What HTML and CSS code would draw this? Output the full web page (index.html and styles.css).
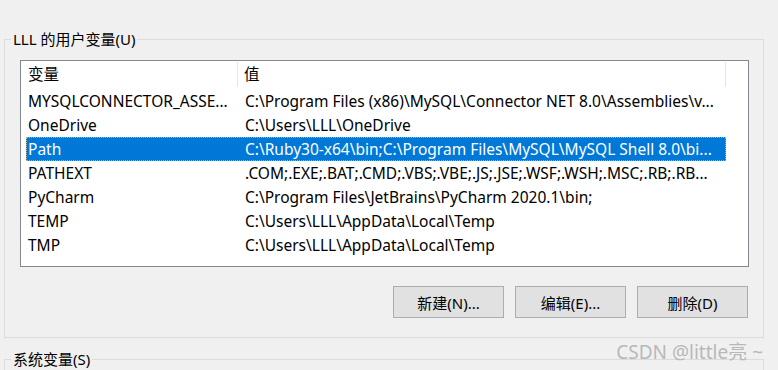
FILE: index.html
```html
<!DOCTYPE html>
<html lang="zh-CN">
  <head>
    <meta charset="UTF-8" />
    <meta name="viewport" content="width=device-width, initial-scale=1.0" />
    <title>环境变量</title>
    <link rel="stylesheet" href="styles.css">
  </head>
  <body>
    <fieldset class="group">
      <legend>LLL 的用户变量(U)</legend>

      <div class="list">
        <div class="list-head">
          <div class="col-name">变量</div>
          <div class="col-value">值</div>
        </div>
        <div class="row">
          <div class="col-name">MYSQLCONNECTOR_ASSE...</div>
          <div class="col-value">C:\Program Files (x86)\MySQL\Connector NET 8.0\Assemblies\v...</div>
        </div>
        <div class="row">
          <div class="col-name">OneDrive</div>
          <div class="col-value">C:\Users\LLL\OneDrive</div>
        </div>
        <div class="row selected">
          <div class="col-name">Path</div>
          <div class="col-value">C:\Ruby30-x64\bin;C:\Program Files\MySQL\MySQL Shell 8.0\bi...</div>
        </div>
        <div class="row">
          <div class="col-name">PATHEXT</div>
          <div class="col-value">.COM;.EXE;.BAT;.CMD;.VBS;.VBE;.JS;.JSE;.WSF;.WSH;.MSC;.RB;.RB...</div>
        </div>
        <div class="row">
          <div class="col-name">PyCharm</div>
          <div class="col-value">C:\Program Files\JetBrains\PyCharm 2020.1\bin;</div>
        </div>
        <div class="row">
          <div class="col-name">TEMP</div>
          <div class="col-value">C:\Users\LLL\AppData\Local\Temp</div>
        </div>
        <div class="row">
          <div class="col-name">TMP</div>
          <div class="col-value">C:\Users\LLL\AppData\Local\Temp</div>
        </div>
      </div>

      <div class="buttons">
        <button type="button">新建(N)...</button>
        <button type="button">编辑(E)...</button>
        <button type="button">删除(D)</button>
      </div>
    </fieldset>

    <fieldset class="group group-system">
      <legend>系统变量(S)</legend>
    </fieldset>

    <p class="watermark">CSDN @little亮 ~</p>
  </body>
</html>
```

FILE: styles.css
```css
html {
  font-family: "Noto Sans", "Noto Sans CJK SC", sans-serif;
  font-size: 15px;
  height: 370px;
  overflow: hidden;
}

body {
  margin: 0;
  padding: 0;
  background-color: #f0f0f0;
  color: #000;
  overflow: hidden;
  height: 370px;
  position: relative;
}

/* group boxes */
.group {
  box-sizing: border-box;
  width: 760px;
  margin: 29px 0 0 4px;
  padding: 11px 14px 19px 15px;
  border: 1px solid #dcdcdc;
  min-width: 0;
}

.group legend {
  margin-left: -9px;
  padding: 0 2px;
  font-size: 15px;
  line-height: 20px;
}

.group-system {
  margin-top: 11px;
  height: 40px;
}

/* list view */
.list {
  height: 205px;
  border: 1px solid #828790;
  background-color: #fff;
  overflow: hidden;
  font-size: 15.5px;
}

.list-head {
  display: grid;
  grid-template-columns: 217px 488px;
  height: 28px;
}

.list-head > div {
  margin: 1px 0 2px;
  line-height: 25px;
}

.list-head .col-name {
  padding-left: 7px;
  border-right: 1px solid #e5e5e5;
}

.list-head .col-value {
  padding-left: 6px;
  border-right: 1px solid #e5e5e5;
}

.row {
  display: grid;
  grid-template-columns: 212px 488px;
  width: 700px;
  margin-left: 5px;
  height: 24px;
  line-height: 24px;
  white-space: nowrap;
}

.row > div {
  overflow: hidden;
}

.row .col-name {
  padding-left: 2px;
}

.row .col-value {
  padding-left: 7px;
}

.row.selected {
  background-color: #0078d7;
  color: #fff;
  outline: 1px dotted #f0a040;
  outline-offset: -1px;
}

/* buttons */
.buttons {
  display: flex;
  justify-content: flex-end;
  gap: 11px;
  margin-top: 19px;
  padding-right: 1px;
}

.buttons button {
  width: 111px;
  height: 32px;
  background-color: #e1e1e1;
  border: 1px solid #adadad;
  font-family: inherit;
  font-size: 15px;
  color: #000;
  padding: 0;
}

.watermark {
  position: absolute;
  right: 15px;
  top: 339px;
  margin: 0;
  font-size: 19px;
  line-height: 26px;
  color: #b8b8b8;
}
```
